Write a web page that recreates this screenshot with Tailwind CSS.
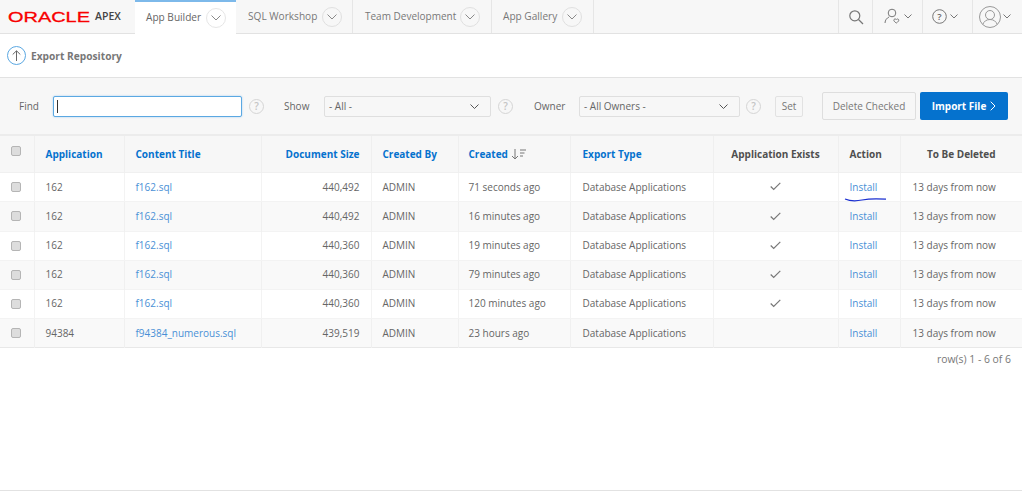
<!doctype html>
<html>
<head>
<meta charset="utf-8">
<script src="https://cdn.jsdelivr.net/npm/@tailwindcss/browser@4"></script>
</head>
<body class="relative w-[1022px] h-[492px] overflow-hidden bg-white font-['Open_Sans',sans-serif] text-[10px] text-[#666] whitespace-nowrap">
<header class="flex h-[34px] bg-[#f7f7f7] border-b border-[#e2e2e2]">
  <div class="w-[135px] shrink-0 flex items-center pl-[8px] gap-[5px]">
    <svg width="82" height="16" class="shrink-0"><text x="0" y="13" textLength="82" lengthAdjust="spacingAndGlyphs" font-family="Liberation Sans" font-size="14" font-weight="400" fill="#f80000" stroke="#f80000" stroke-width="0.3">ORACLE</text></svg>
    <span class="text-[10.5px] text-[#444] font-semibold">APEX</span>
  </div>
  <div class="flex h-[34px] items-center w-[101px] shrink-0 bg-white border-t-2 border-[#7db9ea] -mb-px pl-[11px] pr-[10px] justify-between text-[#666] text-[10.1px]">
    <span>App Builder</span>
    <span class="w-[20px] h-[20px] rounded-full border border-[#e6e6e6] flex items-center justify-center"><svg width="10" height="6" fill="none" stroke="#8a8a8a"><path d="M.5.5 5 5 9.500.5"/></svg></span>
  </div>
  <div class="flex items-center w-[117px] shrink-0 border-r border-[#e6e6e6] pl-[12px] pr-[10px] justify-between text-[#777] text-[10.1px]">
    <span>SQL Workshop</span>
    <span class="w-[20px] h-[20px] rounded-full border border-[#e0e0e0] flex items-center justify-center"><svg width="10" height="6" fill="none" stroke="#8a8a8a"><path d="M.5.5 5 5 9.500.5"/></svg></span>
  </div>
  <div class="flex items-center w-[139px] shrink-0 border-r border-[#e6e6e6] pl-[12px] pr-[11px] justify-between text-[#777] text-[10px]">
    <span>Team Development</span>
    <span class="w-[20px] h-[20px] rounded-full border border-[#e0e0e0] flex items-center justify-center"><svg width="10" height="6" fill="none" stroke="#8a8a8a"><path d="M.5.5 5 5 9.500.5"/></svg></span>
  </div>
  <div class="flex items-center w-[102px] shrink-0 border-r border-[#e6e6e6] pl-[11px] pr-[11px] justify-between text-[#777] text-[10.1px]">
    <span>App Gallery</span>
    <span class="w-[20px] h-[20px] rounded-full border border-[#e0e0e0] flex items-center justify-center"><svg width="10" height="6" fill="none" stroke="#8a8a8a"><path d="M.5.5 5 5 9.500.5"/></svg></span>
  </div>
  <div class="flex-1"></div>
  <div class="w-[34px] flex items-center justify-center border-l border-[#e6e6e6]">
    <svg width="16" height="16" fill="none" stroke="#777" stroke-width="1.2"><circle cx="6.8" cy="6.8" r="5"/><path d="m10.500 10.500 4.500 4.500"/></svg>
  </div>
  <div class="w-[50px] flex items-center justify-center gap-[2px] border-l border-[#e6e6e6]">
    <svg width="18" height="17" fill="none" stroke="#777" stroke-width="1"><circle cx="8" cy="5" r="3.8"/><path d="M1 15c0-3 2-5 4-6"/><path d="M10 11.500c1-1 2-.4 2.300.1.300-.5 1.400-1.100 2.300-.1.700 1-.6 2.500-2.300 3.500-1.700-1-3-2.500-2.300-3.500Z"/></svg>
    <svg width="8" height="5" fill="none" stroke="#777"><path d="M.5.5 4 4 7.500.5"/></svg>
  </div>
  <div class="w-[50px] flex items-center pl-[9px] gap-[3px] border-l border-[#e6e6e6]">
    <svg width="15" height="15" fill="none" stroke="#777"><circle cx="7.500" cy="7.500" r="6.800"/><text x="7.500" y="11" text-anchor="middle" font-family="Open Sans" font-size="9.500" font-weight="600" fill="#666" stroke="none">?</text></svg>
    <svg width="8" height="5" fill="none" stroke="#777"><path d="M.5.5 4 4 7.500.5"/></svg>
  </div>
  <div class="w-[50px] flex items-center pl-[6px] gap-[2px] border-l border-[#e6e6e6]">
    <svg width="22" height="22" fill="none" stroke="#999"><circle cx="11" cy="11" r="10.500"/><circle cx="11" cy="9" r="4.500"/><path d="M3.800 18.500c1-3 3.500-5 7.200-5s6.200 2 7.200 5"/></svg>
    <svg width="8" height="5" fill="none" stroke="#777"><path d="M.5.5 4 4 7.500.5"/></svg>
  </div>
</header>

<section class="h-[44px] flex items-center pl-[7px] gap-[5px] border-b border-[#e2e2e2]">
  <span class="w-[19px] h-[19px] rounded-full border border-[#5ba8e2] flex items-center justify-center"><svg width="9" height="11" fill="none" stroke="#666"><path d="M4.500 11V1M.7 4.500 4.500.8 8.300 4.500"/></svg></span>
  <span class="font-bold text-[#777] text-[10.2px] pt-[2px]">Export Repository</span>
</section>

<section class="h-[58px] flex items-center bg-[#f7f7f7] border-b-2 border-[#ececec]">
  <span class="ml-[19px] w-[34px] pt-[1px]">Find</span>
  <div class="w-[189px] h-[21px] bg-white border border-[#5ba8e2] rounded-[2px] shadow-[0_0_2px_#9cc9ee] flex items-center pl-[3px]"><span class="w-px h-[13px] bg-[#333]"></span></div>
  <span class="ml-[7px] w-[15px] h-[15px] rounded-full border border-[#d5d5d5] text-[#c4c4c4] text-[10px] font-semibold flex items-center justify-center">?</span>
  <span class="ml-[20px] w-[40px] pt-[1px]">Show</span>
  <div class="w-[167px] h-[21px] bg-[#f7f7f7] border border-[#dfdfdf] rounded-[2px] flex items-center justify-between pl-[4px] pr-[11px]">
    <span class="pt-[1px]">- All -</span>
    <svg width="9" height="5" fill="none" stroke="#555"><path d="M.5.5 4.500 4.500 8.500.5"/></svg>
  </div>
  <span class="ml-[7px] w-[15px] h-[15px] rounded-full border border-[#d5d5d5] text-[#c4c4c4] text-[10px] font-semibold flex items-center justify-center">?</span>
  <span class="ml-[21px] w-[45px] pt-[1px]">Owner</span>
  <div class="w-[161px] h-[21px] bg-[#f7f7f7] border border-[#dfdfdf] rounded-[2px] flex items-center justify-between pl-[4px] pr-[11px]">
    <span class="pt-[1px]">- All Owners -</span>
    <svg width="9" height="5" fill="none" stroke="#555"><path d="M.5.5 4.500 4.500 8.500.5"/></svg>
  </div>
  <span class="ml-[6px] w-[15px] h-[15px] rounded-full border border-[#d5d5d5] text-[#c4c4c4] text-[10px] font-semibold flex items-center justify-center">?</span>
  <span class="ml-[14px] w-[28px] h-[21px] border border-[#e2e2e2] rounded-[2px] flex items-center justify-center text-[#777] text-[10px] pt-[1px]">Set</span>
  <span class="ml-[19px] w-[94px] h-[28px] border border-[#dedede] rounded-[2px] flex items-center justify-center text-[#777]">Delete Checked</span>
  <span class="ml-[4px] w-[88px] h-[28px] bg-[#0572ce] rounded-[2px] flex items-center justify-center gap-[4px] text-white font-bold"><span>Import File</span><svg width="6" height="10" fill="none" stroke="#fff"><path d="m.7.7 4.300 4.300-4.300 4.300"/></svg></span>
</section>

<table class="w-[1022px] table-fixed border-collapse">
  <colgroup>
    <col class="w-[34px]"><col class="w-[90px]"><col class="w-[137px]"><col class="w-[110px]"><col class="w-[87px]"><col class="w-[112px]"><col class="w-[143px]"><col class="w-[125px]"><col class="w-[62px]"><col class="w-[122px]">
  </colgroup>
  <thead>
    <tr class="h-[36px] bg-[#f7f7f7] text-[#0572ce] font-bold border-b border-[#f0f0f0]">
      <th class="border-r border-[#efefef] text-left pl-[11px] pb-[6px]"><span class="block w-[10px] h-[10px] rounded-[2px] bg-[#ddd] border border-[#b5b5b5]"></span></th>
      <th class="border-r border-[#efefef] text-left pl-[11px] pt-[1px]">Application</th>
      <th class="border-r border-[#efefef] text-left pl-[11px] pt-[1px]">Content Title</th>
      <th class="border-r border-[#efefef] text-right pr-[11px] pt-[1px]">Document Size</th>
      <th class="border-r border-[#efefef] text-left pl-[11px] pt-[1px]">Created By</th>
      <th class="border-r border-[#efefef] text-left pl-[10px] pt-[1px]"><span class="inline-flex items-center gap-[3px]">Created <svg width="15" height="12" fill="none" stroke="#777"><path d="M4 1v10M1 8l3 3 3-3M9 2h6M9 5h4.500M9 8h3"/></svg></span></th>
      <th class="border-r border-[#efefef] text-left pl-[12px] pt-[1px]">Export Type</th>
      <th class="border-r border-[#efefef] text-center text-[#4f4f4f] pt-[1px]">Application Exists</th>
      <th class="border-r border-[#efefef] text-left pl-[11px] text-[#4f4f4f] pt-[1px]">Action</th>
      <th class="text-center text-[#4f4f4f] pt-[1px]">To Be Deleted</th>
    </tr>
  </thead>
  <tbody>
    <tr class="h-[29px] bg-white border-b border-[#f3f3f3]">
      <td class="border-r border-[#f3f3f3] pl-[11px]"><span class="block w-[10px] h-[10px] rounded-[2px] bg-[#ddd] border border-[#b5b5b5]"></span></td>
      <td class="border-r border-[#f3f3f3] pl-[11px] pt-[1px]">162</td>
      <td class="border-r border-[#f3f3f3] pl-[11px] pt-[1px] text-[#4a90d6]">f162.sql</td>
      <td class="border-r border-[#f3f3f3] text-right pr-[11px] pt-[1px]">440,492</td>
      <td class="border-r border-[#f3f3f3] pl-[11px] pt-[1px]">ADMIN</td>
      <td class="border-r border-[#f3f3f3] pl-[10px] pt-[1px]">71 seconds ago</td>
      <td class="border-r border-[#f3f3f3] pl-[12px] pt-[1px]">Database Applications</td>
      <td class="border-r border-[#f3f3f3]"><svg class="mx-auto" width="11" height="9" fill="none" stroke="#777" stroke-width="1.200"><path d="m.7 4.500 3 3L10.300.8"/></svg></td>
      <td class="border-r border-[#f3f3f3] pl-[11px] pt-[1px] text-[#4a90d6]">Install</td>
      <td class="pl-[12px] pt-[1px]">13 days from now</td>
    </tr>
    <tr class="h-[30px] bg-[#f9f9f9] border-b border-[#f3f3f3]">
      <td class="border-r border-[#f0f0f0] pl-[11px]"><span class="block w-[10px] h-[10px] rounded-[2px] bg-[#ddd] border border-[#b5b5b5]"></span></td>
      <td class="border-r border-[#f0f0f0] pl-[11px]">162</td>
      <td class="border-r border-[#f0f0f0] pl-[11px] text-[#4a90d6]">f162.sql</td>
      <td class="border-r border-[#f0f0f0] text-right pr-[11px]">440,492</td>
      <td class="border-r border-[#f0f0f0] pl-[11px]">ADMIN</td>
      <td class="border-r border-[#f0f0f0] pl-[10px]">16 minutes ago</td>
      <td class="border-r border-[#f0f0f0] pl-[12px]">Database Applications</td>
      <td class="border-r border-[#f0f0f0]"><svg class="mx-auto" width="11" height="9" fill="none" stroke="#777" stroke-width="1.200"><path d="m.7 4.500 3 3L10.300.8"/></svg></td>
      <td class="border-r border-[#f0f0f0] pl-[11px] text-[#4a90d6]">Install</td>
      <td class="pl-[12px]">13 days from now</td>
    </tr>
    <tr class="h-[29px] bg-white border-b border-[#f3f3f3]">
      <td class="border-r border-[#f3f3f3] pl-[11px]"><span class="block w-[10px] h-[10px] rounded-[2px] bg-[#ddd] border border-[#b5b5b5]"></span></td>
      <td class="border-r border-[#f3f3f3] pl-[11px]">162</td>
      <td class="border-r border-[#f3f3f3] pl-[11px] text-[#4a90d6]">f162.sql</td>
      <td class="border-r border-[#f3f3f3] text-right pr-[11px]">440,360</td>
      <td class="border-r border-[#f3f3f3] pl-[11px]">ADMIN</td>
      <td class="border-r border-[#f3f3f3] pl-[10px]">19 minutes ago</td>
      <td class="border-r border-[#f3f3f3] pl-[12px]">Database Applications</td>
      <td class="border-r border-[#f3f3f3]"><svg class="mx-auto" width="11" height="9" fill="none" stroke="#777" stroke-width="1.200"><path d="m.7 4.500 3 3L10.300.8"/></svg></td>
      <td class="border-r border-[#f3f3f3] pl-[11px] text-[#4a90d6]">Install</td>
      <td class="pl-[12px]">13 days from now</td>
    </tr>
    <tr class="h-[29px] bg-[#f9f9f9] border-b border-[#f3f3f3]">
      <td class="border-r border-[#f0f0f0] pl-[11px]"><span class="block w-[10px] h-[10px] rounded-[2px] bg-[#ddd] border border-[#b5b5b5]"></span></td>
      <td class="border-r border-[#f0f0f0] pl-[11px]">162</td>
      <td class="border-r border-[#f0f0f0] pl-[11px] text-[#4a90d6]">f162.sql</td>
      <td class="border-r border-[#f0f0f0] text-right pr-[11px]">440,360</td>
      <td class="border-r border-[#f0f0f0] pl-[11px]">ADMIN</td>
      <td class="border-r border-[#f0f0f0] pl-[10px]">79 minutes ago</td>
      <td class="border-r border-[#f0f0f0] pl-[12px]">Database Applications</td>
      <td class="border-r border-[#f0f0f0]"><svg class="mx-auto" width="11" height="9" fill="none" stroke="#777" stroke-width="1.200"><path d="m.7 4.500 3 3L10.300.8"/></svg></td>
      <td class="border-r border-[#f0f0f0] pl-[11px] text-[#4a90d6]">Install</td>
      <td class="pl-[12px]">13 days from now</td>
    </tr>
    <tr class="h-[29px] bg-white border-b border-[#f3f3f3]">
      <td class="border-r border-[#f3f3f3] pl-[11px]"><span class="block w-[10px] h-[10px] rounded-[2px] bg-[#ddd] border border-[#b5b5b5]"></span></td>
      <td class="border-r border-[#f3f3f3] pl-[11px]">162</td>
      <td class="border-r border-[#f3f3f3] pl-[11px] text-[#4a90d6]">f162.sql</td>
      <td class="border-r border-[#f3f3f3] text-right pr-[11px]">440,360</td>
      <td class="border-r border-[#f3f3f3] pl-[11px]">ADMIN</td>
      <td class="border-r border-[#f3f3f3] pl-[10px]">120 minutes ago</td>
      <td class="border-r border-[#f3f3f3] pl-[12px]">Database Applications</td>
      <td class="border-r border-[#f3f3f3]"><svg class="mx-auto" width="11" height="9" fill="none" stroke="#777" stroke-width="1.200"><path d="m.7 4.500 3 3L10.300.8"/></svg></td>
      <td class="border-r border-[#f3f3f3] pl-[11px] text-[#4a90d6]">Install</td>
      <td class="pl-[12px]">13 days from now</td>
    </tr>
    <tr class="h-[29px] bg-[#f9f9f9] border-b border-[#e8e8e8]">
      <td class="border-r border-[#f0f0f0] pl-[11px]"><span class="block w-[10px] h-[10px] rounded-[2px] bg-[#ddd] border border-[#b5b5b5]"></span></td>
      <td class="border-r border-[#f0f0f0] pl-[11px] pt-[1px]">94384</td>
      <td class="border-r border-[#f0f0f0] pl-[11px] pt-[1px] text-[#4a90d6]">f94384_numerous.sql</td>
      <td class="border-r border-[#f0f0f0] text-right pr-[11px] pt-[1px]">439,519</td>
      <td class="border-r border-[#f0f0f0] pl-[11px] pt-[1px]">ADMIN</td>
      <td class="border-r border-[#f0f0f0] pl-[10px] pt-[1px]">23 hours ago</td>
      <td class="border-r border-[#f0f0f0] pl-[12px] pt-[1px]">Database Applications</td>
      <td class="border-r border-[#f0f0f0]"></td>
      <td class="border-r border-[#f0f0f0] pl-[11px] pt-[1px] text-[#4a90d6]">Install</td>
      <td class="pl-[12px] pt-[1px]">13 days from now</td>
    </tr>
  </tbody>
</table>
<div class="text-right pr-[11px] pt-[4px] text-[#777] text-[10.4px]">row(s) 1 - 6 of 6</div>

<svg class="absolute left-[844px] top-[195px]" width="44" height="8" fill="none" stroke="#1a2fd0" stroke-width="1.200"><path d="M1 4c6 2.500 11 2.200 17 1 7-1.400 14-1.600 24-.8"/></svg>
<div class="absolute left-0 top-[490px] w-full border-t border-[#e2e2e2]"></div>
</body>
</html>
